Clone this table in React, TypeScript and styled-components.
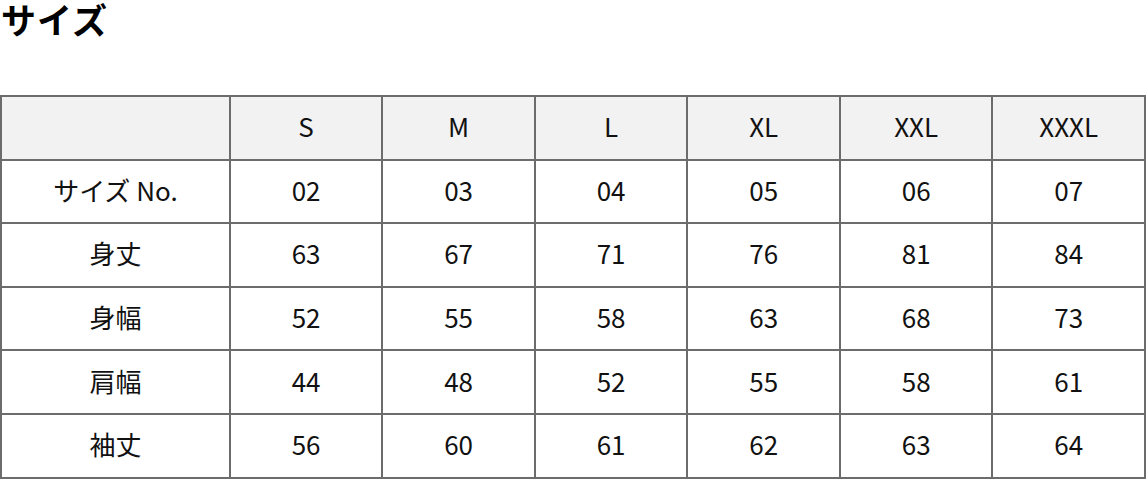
import React from "react";
import styled, { createGlobalStyle } from "styled-components";

const Global = createGlobalStyle`
  html, body { margin: 0; padding: 0; background: #fff; }
  body { font-family: "Noto Sans CJK JP", "Noto Sans", sans-serif; color: #111; }
`;

const Page = styled.div`
  width: 1148px;
`;

const Title = styled.h2`
  margin: 0;
  padding-left: 1px;
  font-size: 35px;
  font-weight: 700;
  line-height: 38px;
  color: #000;
  letter-spacing: 1px;
`;

const Table = styled.table`
  margin-top: 57px;
  width: 1146px;
  border-collapse: collapse;
  table-layout: fixed;
`;

const Cell = styled.td<{ $head?: boolean }>`
  border: 2px solid #6c6c6c;
  height: 57.6px;
  padding: 0 0 4px;
  text-align: center;
  vertical-align: middle;
  font-size: 26px;
  font-weight: 400;
  color: #111;
  background: ${(p) => (p.$head ? "#f2f2f2" : "#fff")};
`;

const sizes = ["S", "M", "L", "XL", "XXL", "XXXL"];
const rows: [string, string[]][] = [
  ["サイズ No.", ["02", "03", "04", "05", "06", "07"]],
  ["身丈", ["63", "67", "71", "76", "81", "84"]],
  ["身幅", ["52", "55", "58", "63", "68", "73"]],
  ["肩幅", ["44", "48", "52", "55", "58", "61"]],
  ["袖丈", ["56", "60", "61", "62", "63", "64"]],
];

export default function App() {
  return (
    <Page>
      <Global />
      <Title>サイズ</Title>
      <Table>
        <colgroup>
          <col style={{ width: "20%" }} />
          {sizes.map((s) => (
            <col key={s} />
          ))}
        </colgroup>
        <thead>
          <tr>
            <Cell as="th" $head />
            {sizes.map((s) => (
              <Cell as="th" $head key={s}>
                {s}
              </Cell>
            ))}
          </tr>
        </thead>
        <tbody>
          {rows.map(([label, vals]) => (
            <tr key={label}>
              <Cell>{label}</Cell>
              {vals.map((v, i) => (
                <Cell key={i}>{v}</Cell>
              ))}
            </tr>
          ))}
        </tbody>
      </Table>
    </Page>
  );
}
